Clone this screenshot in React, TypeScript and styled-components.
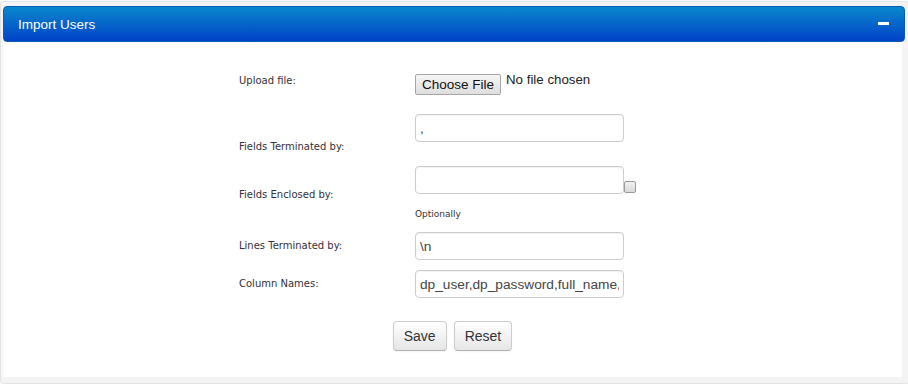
import React from 'react';
import styled, { createGlobalStyle } from 'styled-components';

const GlobalStyle = createGlobalStyle`
  html, body {
    margin: 0;
    padding: 0;
    background: #ffffff;
  }
`;

const Panel = styled.section`
  width: 902px;
  margin: 1px 0 0 0;
  padding: 4px 3px 6px 2px;
  background: #f4f4f4;
  border: 1px solid #e3e3e3;
  border-radius: 3px;
`;

const Header = styled.header`
  height: 36px;
  display: flex;
  align-items: center;
  justify-content: space-between;
  padding: 0 15px 0 14px;
  border-radius: 4px;
  background: linear-gradient(to bottom, #0a88cc, #0042c8);
  border: 1px solid #0a5ab8;
  box-sizing: border-box;

  h3 {
    margin: 0;
    font-family: 'Liberation Sans', Arial, sans-serif;
    font-size: 13.5px;
    font-weight: normal;
    color: #ffffff;
  }
`;

const Collapse = styled.span`
  width: 11px;
  height: 3px;
  margin-top: -2px;
  background: #ffffff;
`;

const Body = styled.div`
  background: #ffffff;
  padding: 32px 0 26px;
  width: 899px;
`;

const Form = styled.form`
  padding-left: 236px;
`;

const Row = styled.div<{ $top: number; $align?: string }>`
  display: grid;
  grid-template-columns: 176px auto;
  align-items: ${p => p.$align || 'start'};
  margin-top: ${p => p.$top}px;
`;

const Label = styled.label<{ $offset?: number }>`
  font-family: 'DejaVu Sans', Verdana, sans-serif;
  font-size: 10px;
  line-height: 14px;
  color: #33303a;
  margin-top: ${p => p.$offset || 0}px;
`;

const Cell = styled.div`
  display: flex;
  flex-direction: column;
  align-items: flex-start;
`;

const Inline = styled.div<{ $align?: string }>`
  display: flex;
  align-items: ${p => p.$align || 'flex-end'};
`;

const FileButton = styled.button`
  height: 21px;
  width: 86px;
  padding: 0;
  font-family: 'Liberation Sans', Arial, sans-serif;
  font-size: 13.5px;
  color: #111;
  background: linear-gradient(to bottom, #f6f6f6, #dedede);
  border: 1px solid #a6a6a6;
  border-radius: 2px;
`;

const FileName = styled.span`
  margin: -1px 0 0 5px;
  font-family: 'Liberation Sans', Arial, sans-serif;
  font-size: 13.3px;
  line-height: 14px;
  color: #222;
`;

const TextInput = styled.input`
  box-sizing: border-box;
  width: 209px;
  height: 28px;
  padding: 0 4px;
  font-family: 'Liberation Sans', Arial, sans-serif;
  font-size: 13.7px;
  color: #444;
  border: 1px solid #cccccc;
  border-radius: 4px;
  box-shadow: inset 0 1px 1px rgba(0, 0, 0, 0.05);
  outline: none;
`;

const Check = styled.input`
  appearance: none;
  width: 12px;
  height: 12px;
  margin: 0 0 1px 0;
  border: 1px solid #9a9a9a;
  border-radius: 2px;
  background: linear-gradient(to bottom, #f2f2f2, #d8d8d8);
  box-sizing: border-box;
`;

const Hint = styled.span`
  margin-top: 14px;
  font-family: 'DejaVu Sans', Verdana, sans-serif;
  font-size: 9px;
  line-height: 12px;
  color: #333;
`;

const Actions = styled.div`
  display: flex;
  justify-content: center;
  gap: 7px;
  margin-top: 23px;
`;

const Button = styled.button`
  height: 30px;
  padding: 0 10px;
  font-family: 'Liberation Sans', Arial, sans-serif;
  font-size: 14px;
  color: #333;
  background: linear-gradient(to bottom, #ffffff, #e6e6e6);
  border: 1px solid #cccccc;
  border-bottom-color: #b3b3b3;
  border-radius: 4px;
  box-shadow: inset 0 1px 0 rgba(255, 255, 255, 0.2), 0 1px 2px rgba(0, 0, 0, 0.05);
`;

const App: React.FC = () => {
  return (
    <>
      <GlobalStyle />
      <Panel>
        <Header>
          <h3>Import Users</h3>
          <Collapse />
        </Header>
        <Body>
          <Form onSubmit={e => e.preventDefault()}>
            <Row $top={0}>
              <Label $offset={0}>Upload file:</Label>
              <Inline $align="flex-start">
                <FileButton type="button">Choose File</FileButton>
                <FileName>No file chosen</FileName>
              </Inline>
            </Row>

            <Row $top={19}>
              <Label $offset={26}>Fields Terminated by:</Label>
              <Cell>
                <TextInput defaultValue="," />
              </Cell>
            </Row>

            <Row $top={12}>
              <Label $offset={22}>Fields Enclosed by:</Label>
              <Cell>
                <Inline>
                  <TextInput defaultValue="" />
                  <Check type="checkbox" />
                </Inline>
                <Hint>Optionally</Hint>
              </Cell>
            </Row>

            <Row $top={12} $align="center">
              <Label>Lines Terminated by:</Label>
              <Cell>
                <TextInput defaultValue="\n" />
              </Cell>
            </Row>

            <Row $top={10} $align="center">
              <Label>Column Names:</Label>
              <Cell>
                <TextInput defaultValue="dp_user,dp_password,full_name,email" />
              </Cell>
            </Row>
          </Form>

          <Actions>
            <Button type="button">Save</Button>
            <Button type="reset">Reset</Button>
          </Actions>
        </Body>
      </Panel>
    </>
  );
};

export default App;
